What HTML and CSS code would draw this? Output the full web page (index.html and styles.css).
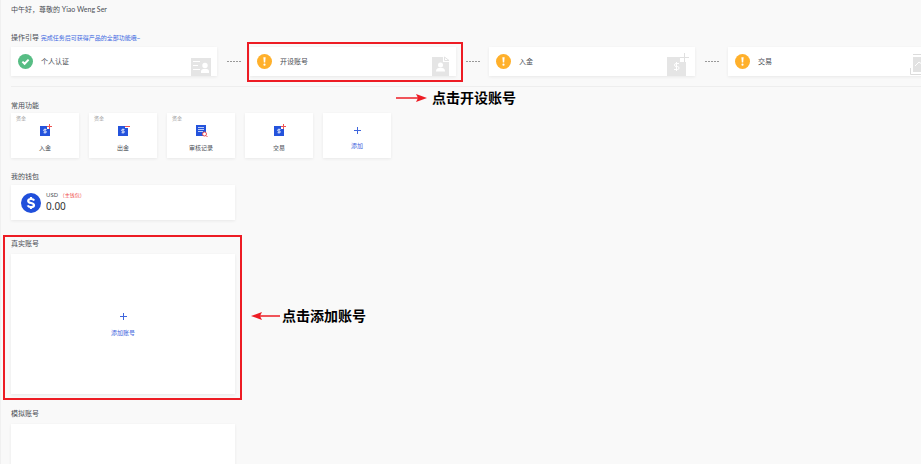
FILE: index.html
```html
<!DOCTYPE html>
<html lang="zh-CN">
	<head>
		<meta charset="UTF-8">
		<title>用户中心</title>
		<link rel="stylesheet" href="styles.css">
	</head>
	<body>
		<main class="page">
			<p class="greeting">中午好，尊敬的 Yiao Weng Ser</p>

			<section class="guide">
				<h2 class="title">操作引导 <a class="hint" href="#">完成任务后可获得产品的全部功能哦~</a></h2>
				<div class="steps">
					<a class="step" href="#">
						<svg class="state" viewBox="0 0 15 15"><circle cx="7.5" cy="7.5" r="7.5" fill="#57bd84"/><path d="M4.4 7.6l2.2 2.2 4-4.2" fill="none" stroke="#fff" stroke-width="2"/></svg>
						<span>个人认证</span>
						<svg class="mark" width="20" height="18" viewBox="0 0 20 18"><path d="M0 0h20v18H0z" fill="#e5e5e5"/><path d="M2 3.5h7M2 7.5h5M2 11.5h7" stroke="#fff"/><circle cx="14" cy="7.5" r="2.7" fill="#fff"/><path d="M10 15v-1.5q0-2.5 2.5-2.5h3q2.5 0 2.5 2.5V15z" fill="#fff"/></svg>
					</a>
					<span class="dash"></span>
					<a class="step" href="#">
						<svg class="state" viewBox="0 0 15 15"><circle cx="7.5" cy="7.5" r="7.5" fill="#ffb02b"/><path d="M6.4 3.3h2.2l-.4 5.2H6.8z" fill="#fff"/><circle cx="7.5" cy="10.7" r="1.1" fill="#fff"/></svg>
						<span>开设账号</span>
						<svg class="mark" width="18" height="20" viewBox="0 0 18 20"><path d="M0 1h11v5h6v14H0z" fill="#e5e5e5"/><path d="M12.5 1v3.5H17z" fill="#fff" stroke="#e2e2e2"/><circle cx="8.5" cy="9" r="2.5" fill="#fff"/><path d="M4 15.5q0-3.5 3-3.5h3q3 0 3 3.5z" fill="#fff"/></svg>
						<span class="frame"></span>
						<strong class="note note-open"><svg width="31" height="10" viewBox="0 0 31 10"><path d="M0 5h24" stroke="#ed1c24" stroke-width="1.5"/><path d="M20 1l11 4-11 4 2-4z" fill="#ed1c24"/></svg>点击开设账号</strong>
					</a>
					<span class="dash"></span>
					<a class="step" href="#">
						<svg class="state" viewBox="0 0 15 15"><circle cx="7.5" cy="7.5" r="7.5" fill="#ffb02b"/><path d="M6.4 3.3h2.2l-.4 5.2H6.8z" fill="#fff"/><circle cx="7.5" cy="10.7" r="1.1" fill="#fff"/></svg>
						<span>入金</span>
						<svg class="mark" width="23" height="23" viewBox="0 0 23 23"><path d="M1 4h13v5h6v14H1z" fill="#e5e5e5"/><path d="M18.5 0v9M14 4.5h9" stroke="#e0e0e0"/><path d="M13 10.5h-3q-1.5 0-1.5 1.500t1.5 1.500h1.5q1.5 0 1.500 1.500t-1.500 1.500H8M10.500 9v9" fill="none" stroke="#fff"/></svg>
					</a>
					<span class="dash"></span>
					<a class="step" href="#">
						<svg class="state" viewBox="0 0 15 15"><circle cx="7.5" cy="7.5" r="7.5" fill="#ffb02b"/><path d="M6.4 3.3h2.2l-.4 5.2H6.8z" fill="#fff"/><circle cx="7.5" cy="10.7" r="1.1" fill="#fff"/></svg>
						<span>交易</span>
						<svg class="mark" width="18" height="23" viewBox="0 0 18 23"><path d="M3 4h15v15H3z" fill="#e2e2e2"/><path d="M3 1.5h15M.5 15v6.5H18" fill="none" stroke="#dcdcdc"/><path d="M5 13l4-4 4 3 4-4" fill="none" stroke="#fff"/></svg>
					</a>
				</div>
			</section>

			<section class="common">
				<h2 class="title">常用功能</h2>
				<div class="tiles">
					<button class="tile"><small>资金</small>
						<svg width="13" height="13" viewBox="0 0 13 13"><path d="M1 2h7v3h3v7H1z" fill="#2453dc"/><path d="M10.5 0v5M8 2.5h5" stroke="#ee5353"/><path d="M7.5 5.5h-2q-1 0-1 .8t1 .8h1q1 0 1 .8t-1 .8h-2M6 4.5v5" fill="none" stroke="#fff" stroke-width=".7"/></svg>
						<span>入金</span></button>
					<button class="tile"><small>资金</small>
						<svg width="13" height="13" viewBox="0 0 13 13"><path d="M1 2h7v2h3v8H1z" fill="#2453dc"/><path d="M8 2.5h5" stroke="#ee5353"/><path d="M7.5 5.5h-2q-1 0-1 .8t1 .8h1q1 0 1 .8t-1 .8h-2M6 4.5v5" fill="none" stroke="#fff" stroke-width=".7"/></svg>
						<span>出金</span></button>
					<button class="tile"><small>资金</small>
						<svg width="13" height="13" viewBox="0 0 13 13"><path d="M1 1h10v11H1z" fill="#2453dc"/><path d="M3 3.5h6M3 5.5h6M3 7.5h5" stroke="#fff" stroke-width=".7"/><circle cx="9.5" cy="10" r="2" fill="#fff" stroke="#ee5353"/><path d="M11 11.5l1.5 1.5" stroke="#ee5353"/></svg>
						<span>审核记录</span></button>
					<button class="tile">
						<svg width="13" height="13" viewBox="0 0 13 13"><path d="M1 2h7v3h3v7H1z" fill="#2453dc"/><path d="M10.5 0v5M8 2.5h5" stroke="#ee5353"/><path d="M7.5 5.5h-2q-1 0-1 .8t1 .8h1q1 0 1 .8t-1 .8h-2M6 4.5v5" fill="none" stroke="#fff" stroke-width=".7"/></svg>
						<span>交易</span></button>
					<button class="tile add">
						<svg width="7" height="7" viewBox="0 0 7 7"><path d="M3.5 0v7M0 3.5h7" stroke="#3f66dd"/></svg>
						<span>添加</span></button>
				</div>
			</section>

			<section class="wallets">
				<h2 class="title">我的钱包</h2>
				<div class="wallet">
					<svg width="20" height="20" viewBox="0 0 20 20"><circle cx="10" cy="10" r="10" fill="#204fdb"/><path d="M13.2 7.5Q12.4 6 10 6 7.200 6 7.200 7.900q0 1.500 2.800 2.100 3 .6 3 2.200 0 1.900-3 1.900-2.600 0-3.300-1.700M10 4v2.500M10 13.500V16" fill="none" stroke="#fff" stroke-width="2.200"/></svg>
					<div class="balance">
						<p class="currency">USD <em>（主钱包）</em></p>
						<p class="amount">0.00</p>
					</div>
				</div>
			</section>

			<section class="accounts real">
				<h2 class="title">真实账号</h2>
				<button class="account add">
					<svg width="7" height="7" viewBox="0 0 7 7"><path d="M3.5 0v7M0 3.5h7" stroke="#3f66dd"/></svg>
					<span>添加账号</span>
				</button>
				<span class="frame"></span>
				<strong class="note note-add"><svg width="31" height="10" viewBox="0 0 31 10"><path d="M7 5h22" stroke="#ed1c24" stroke-width="1.5"/><path d="M11 1L0 5l11 4-2-4z" fill="#ed1c24"/></svg>点击添加账号</strong>
			</section>

			<section class="accounts">
				<h2 class="title">模拟账号</h2>
				<div class="account"></div>
			</section>
		</main>
	</body>
</html>
```
FILE: styles.css
```css
*{
	margin: 0;
	padding: 0;
	box-sizing: border-box;
}
html, body{
	height: 100%;
	overflow: hidden;
}
body{
	background: #f9f9f9;
	color: #4a4e55;
	font-family: "Noto Sans", "Noto Sans CJK SC", sans-serif;
	font-size: 7px;
	line-height: 10px;
}
a{
	color: inherit;
	text-decoration: none;
}
button{
	border: 0;
	color: inherit;
	font: inherit;
	cursor: pointer;
}
svg{
	display: block;
	flex: none;
}
.page{
	min-height: 100%;
	padding: 4px 0 0 10px;
	border-left: 1px solid #f0f0f0;
}
.greeting{
	font-family: Lato, "Noto Sans CJK SC", sans-serif;
}
.title{
	font-size: 7px;
	font-weight: normal;
}
.title .hint{
	color: #4169e1;
	font-size: 6px;
}
.step, .tile, .wallet, .account{
	background: #fff;
	box-shadow: 0 1px 3px rgba(0,0,0,.07);
}

/* guide */
.guide{
	margin-top: 19px;
	padding-bottom: 10px;
	border-bottom: 1px solid #eeeeee;
}
.steps{
	display: flex;
	align-items: center;
	margin-top: 4px;
}
.step{
	position: relative;
	display: flex;
	flex: none;
	align-items: center;
	gap: 8px;
	width: 206px;
	height: 29px;
	padding: 0 6px 0 7px;
}
.step .state{
	width: 15px;
	height: 15px;
}
.step .mark{
	align-self: flex-end;
	margin-left: auto;
}
.dash{
	flex: none;
	width: 14px;
	height: 1px;
	margin: 0 9px 0 10px;
	background: repeating-linear-gradient(90deg, #999 0 2px, transparent 2px 3px);
}

/* red frames and notes */
.frame{
	position: absolute;
	border: 2px solid #ed1c24;
}
.step .frame{
	inset: -5px -7px -6px -3px;
}
.real .frame{
	inset: -4px -7px -6px -8px;
}
.note{
	position: absolute;
	display: flex;
	align-items: center;
	color: #000;
	font-size: 14px;
	line-height: 20px;
	white-space: nowrap;
}
.note-open{
	top: 41px;
	left: 146px;
	gap: 5px;
}
.note-add{
	top: 67px;
	left: 240px;
}

/* common functions */
.common{
	margin-top: 14px;
}
.tiles{
	display: flex;
	gap: 10px;
	margin-top: 2px;
}
.tile{
	position: relative;
	display: flex;
	flex-direction: column;
	align-items: center;
	justify-content: flex-end;
	gap: 6px;
	width: 68px;
	height: 45px;
	padding-bottom: 5px;
	font-size: 6px;
}
.tile small{
	position: absolute;
	top: 0;
	left: 5px;
	color: #999;
	font-size: 5px;
}
.tile.add{
	padding-bottom: 7px;
	gap: 7px;
}
.add{
	color: #3f66dd;
}

/* wallet */
.wallets{
	margin-top: 14px;
}
.wallet{
	display: flex;
	align-items: center;
	gap: 5px;
	width: 224px;
	height: 35px;
	margin-top: 3px;
	padding: 0 10px;
}
.balance{
	padding-bottom: 3px;
}
.currency{
	font-size: 6px;
}
.currency em{
	color: #ef4444;
	font-size: 5px;
	font-style: normal;
}
.amount{
	color: #333;
	font-size: 10px;
	line-height: 12px;
}

/* accounts */
.accounts{
	position: relative;
	width: 224px;
	margin-top: 15px;
}
.real{
	margin-top: 19px;
}
.account{
	display: flex;
	flex-direction: column;
	align-items: center;
	justify-content: center;
	gap: 8px;
	width: 100%;
	height: 140px;
	margin-top: 5px;
	padding-top: 3px;
	font-size: 6px;
}
```
